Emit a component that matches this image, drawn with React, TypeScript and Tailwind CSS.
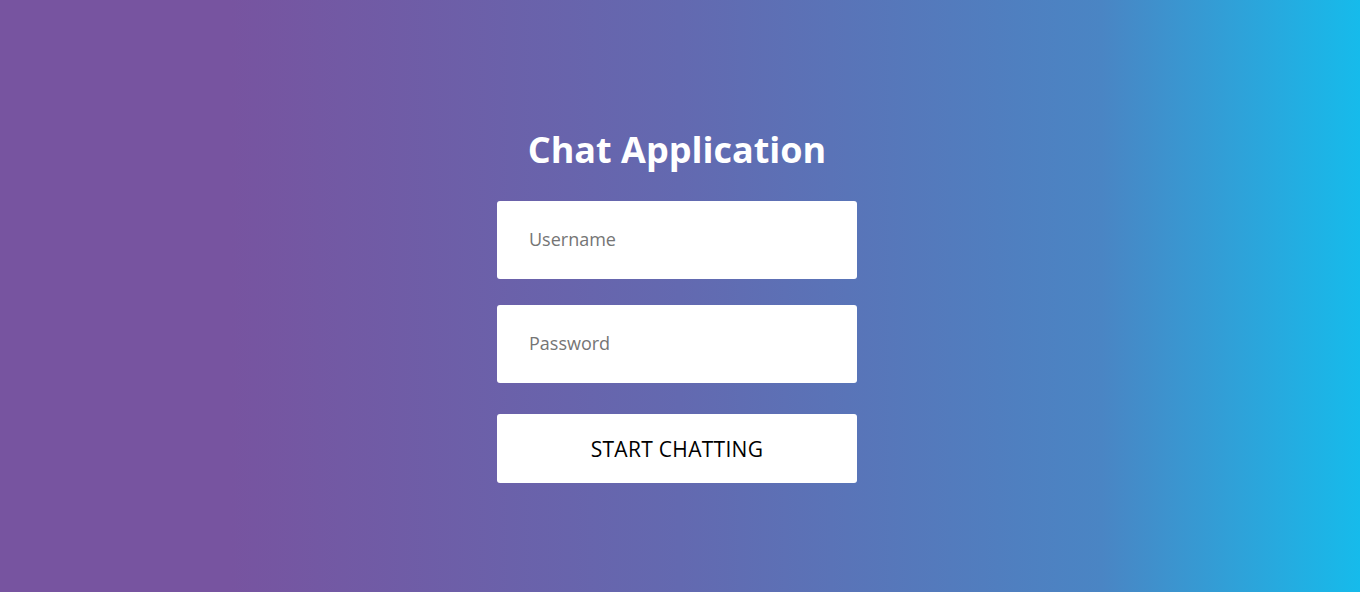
export default function App() {
  return (
    <div className="flex h-[592px] w-full flex-col items-center bg-[linear-gradient(90deg,#7754a0_17%,#6369b0_50%,#4a85c4_81%,#16bbeb_100%)] pr-[6px] pt-[125px] font-['Open_Sans',sans-serif]">
      <h1 className="text-[36px] font-bold leading-[49px] text-white">Chat Application</h1>
      <form className="mt-[27px] flex w-[360px] flex-col" onSubmit={(e) => e.preventDefault()}>
        <input
          type="text"
          placeholder="Username"
          className="h-[78px] w-full rounded-[3px] bg-white px-8 pb-[3px] text-[18px] text-gray-800 outline-none placeholder:text-[#757575]"
        />
        <input
          type="password"
          placeholder="Password"
          className="mt-[26px] h-[78px] w-full rounded-[3px] bg-white px-8 pb-[3px] text-[18px] text-gray-800 outline-none placeholder:text-[#757575]"
        />
        <button
          type="submit"
          className="mt-[31px] h-[69px] w-full rounded-[3px] bg-white pt-[2px] text-[21px] tracking-[0.3px] text-black"
        >
          START CHATTING
        </button>
      </form>
    </div>
  );
}
